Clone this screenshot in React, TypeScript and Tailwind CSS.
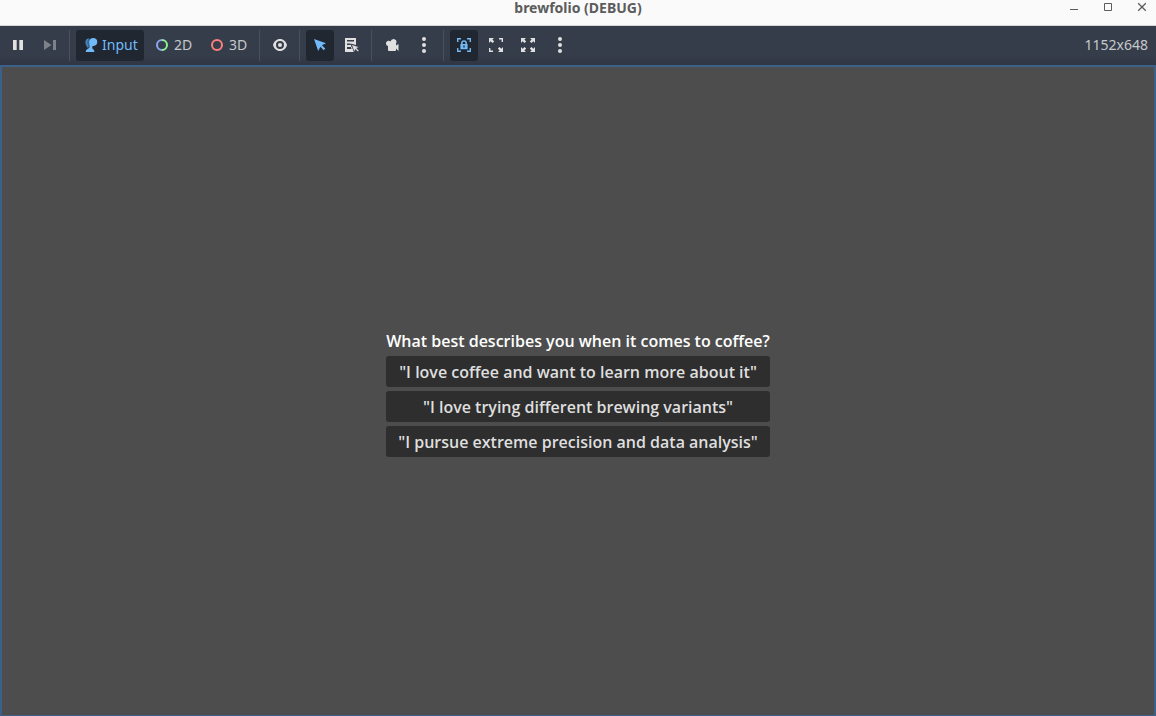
import type { ReactNode } from "react";

const OPTIONS = [
  '"I love coffee and want to learn more about it"',
  '"I love trying different brewing variants"',
  '"I pursue extreme precision and data analysis"',
];

function Icon({ children }: { children: ReactNode }) {
  return (
    <svg viewBox="0 0 16 16" className="size-4 shrink-0" fill="currentColor" aria-hidden="true">
      {children}
    </svg>
  );
}

type ToolProps = { label: string; text?: string; active?: boolean; disabled?: boolean; children: ReactNode };

function Tool({ label, text, active = false, disabled = false, children }: ToolProps) {
  const tone = active ? "bg-[#202731] text-[#70bafa]" : disabled ? "text-[#7d828a]" : "text-[#e0e0e0]";
  return (
    <button
      type="button"
      aria-label={label}
      aria-pressed={active}
      disabled={disabled}
      className={`flex h-[31px] shrink-0 items-center gap-1 rounded-[3px] px-1.5 pb-0.5 ${tone}`}
    >
      <Icon>{children}</Icon>
      {text && <span className={`min-w-[19px] ${active ? "text-[#70bafa]" : "text-[#c5c8cc]"}`}>{text}</span>}
    </button>
  );
}

function Separator() {
  return (
    <div className="flex h-[31px] w-1 shrink-0 pl-px">
      <div className="w-px bg-[#4b515c]" />
    </div>
  );
}

function Dots() {
  return (
    <>
      <circle cx="8" cy="2" r="2" />
      <circle cx="8" cy="8" r="2" />
      <circle cx="8" cy="14" r="2" />
    </>
  );
}

function TitleBar() {
  return (
    <header className="grid h-[26px] grid-cols-[1fr_auto_1fr] border-b border-[#d5d5d5] bg-[#fafafa] text-[#5c5c5c]">
      <h1 className="col-start-2 text-[14px] leading-4 font-bold">brewfolio (DEBUG)</h1>
      <div className="flex h-4 items-center justify-end gap-[18px] pr-1.5">
        <button type="button" aria-label="Minimize">
          <Icon>
            <path d="M4 9h8v1H4z" />
          </Icon>
        </button>
        <button type="button" aria-label="Maximize">
          <Icon>
            <path d="M4.500 3.500h7v7h-7z" fill="none" stroke="currentColor" />
          </Icon>
        </button>
        <button type="button" aria-label="Close">
          <Icon>
            <path d="M4.200 3.200l7.600 7.600M11.800 3.200l-7.600 7.600" stroke="currentColor" strokeWidth="1.300" />
          </Icon>
        </button>
      </div>
    </header>
  );
}

function Toolbar() {
  return (
    <div
      role="toolbar"
      aria-label="Game view"
      className="flex h-[39px] items-center gap-1 bg-linear-to-b from-[#363d4a] from-75% to-[#303642] px-1 text-[14px] leading-5"
    >
      <Tool label="Pause">
        <path d="M3 3h3.700v10H3zM9.300 3H13v10H9.300z" />
      </Tool>
      <Tool label="Next frame" disabled>
        <path d="M2 3l7.500 5L2 13zM11 3h3v10h-3z" />
      </Tool>
      <Separator />
      <Tool label="Input" text="Input" active>
        <path d="M7.500 1.200C4 1.200 2.700 3.700 3.300 6.500 3.700 8.300 4.500 10 5.700 11.500L8.500 8z" fill="#35668f" />
        <path d="M5.800 2C4.200 4 4.400 7 6 9.500" fill="none" stroke="#5a9bd3" strokeWidth=".9" />
        <path d="M11.200 1c2.400 0 4.100 1.600 4.100 3.800 0 2.400-1.500 4-3.700 4.100-.9 0-1.400.5-1.400 1.400 0 1.200.5 1.800 1.500 2.400.4.300.6.800.6 2.300H3.800c0-1.800.3-2.300 1.500-2.800 1.600-.8 2.400-1.600 2.400-3.200 0-1-.6-2.100-.6-3.900C7.100 2.700 8.600 1 11.200 1z" />
      </Tool>
      <Tool label="2D" text="2D">
        <path d="M8 3a5 5 0 0 0 0 10" fill="none" stroke="#8da5f3" strokeWidth="2" />
        <path d="M8 3a5 5 0 0 1 0 10" fill="none" stroke="#8eef97" strokeWidth="2" />
      </Tool>
      <Tool label="3D" text="3D">
        <circle cx="8" cy="8" r="5" fill="none" stroke="#fc7f7f" strokeWidth="2" />
      </Tool>
      <Separator />
      <Tool label="Selection visibility">
        <path
          fillRule="evenodd"
          d="M8 2C4.500 2 2 4.500 1 8c1 3.500 3.500 6 7 6s6-2.500 7-6c-1-3.500-3.500-6-7-6zm0 2a4 4 0 1 1 0 8 4 4 0 0 1 0-8z"
        />
        <circle cx="8" cy="8" r="2" />
      </Tool>
      <Separator />
      <Tool label="Select" active>
        <path d="M2 2l4.200 12 2.200-4.200 3.300 3.400 1.600-1.600L9.900 8.300 14 6.300z" />
      </Tool>
      <Tool label="Show list of selectable nodes">
        <path
          fillRule="evenodd"
          d="M1 1h11v7l-5.500-1.500 1 3.500H8l2 5H1zM3 3v1.500h7V3zM3 6.500V8h4V6.500zM3 10v2h4.500L7 10z"
        />
        <path d="M7.500 7.500l2.700 7.300 1.300-2.400 2.300 2.400 1.200-1.200-2.300-2.300 2.300-1.300z" stroke="#363d4a" strokeWidth=".6" />
      </Tool>
      <Separator />
      <Tool label="Override camera">
        <path d="M9.500 2a3 3 0 0 0-2.900 2.500A2.700 2.700 0 1 0 4 9V13a1 1 0 0 0 1 1h6a1 1 0 0 0 1-1v-1.500L14.500 14V7L12 8.500V6.700A3 3 0 0 0 9.500 2z" />
      </Tool>
      <Tool label="Camera options">
        <Dots />
      </Tool>
      <Separator />
      <Tool label="Fixed size" active>
        <path d="M1.700 5V1.700H5M11 1.700h3.300V5M14.300 11v3.300H11M5 14.300H1.700V11" fill="none" stroke="currentColor" strokeWidth="1.400" />
        <path d="M5.800 7.500V6.200a2.200 2.200 0 0 1 4.400 0v1.300" fill="none" stroke="currentColor" strokeWidth="1.500" />
        <path d="M4.400 7h7.200v5.300H4.400zM7.300 8.500v2h1.400v-2z" fillRule="evenodd" />
      </Tool>
      <Tool label="Keep aspect">
        <path d="M1 1h5L4.400 2.600l1.800 1.800-1.700 1.700-1.900-1.800L1 5.900zM15 15h-5l1.600-1.600-1.800-1.800 1.700-1.700 1.900 1.800L15 10.100z" />
        <path d="M11 1.700h3.300V5M5 14.300H1.700V11" fill="none" stroke="currentColor" strokeWidth="1.400" />
      </Tool>
      <Tool label="Stretch to fit">
        <path d="M1 1h5L4.400 2.600l1.800 1.800-1.700 1.700-1.900-1.800L1 5.900zM15 15h-5l1.600-1.600-1.800-1.800 1.700-1.700 1.900 1.800L15 10.100zM15 1v4.900l-1.600-1.600-1.900 1.800-1.700-1.700 1.800-1.800L10 1zM1 15v-4.900l1.600 1.600 1.900-1.800 1.700 1.700-1.800 1.800L6 15z" />
      </Tool>
      <Tool label="Embedding options">
        <Dots />
      </Tool>
      <span className="ml-auto pr-1 pb-0.5 text-[#c5c8cc]">1152x648</span>
    </div>
  );
}

export default function App() {
  return (
    <div className="flex min-h-screen flex-col bg-[#363d4a] font-['Noto_Sans',sans-serif]">
      <TitleBar />
      <Toolbar />
      <main className="flex flex-1 items-center justify-center border-2 border-b border-[#3b618a] bg-[#4d4d4d] pt-1">
        <section className="flex flex-col gap-1 text-center font-['Open_Sans',sans-serif] text-[16px] leading-[23px] font-semibold">
          <h2 className="pt-0.5 leading-[21px] text-white">What best describes you when it comes to coffee?</h2>
          {OPTIONS.map((option) => (
            <button key={option} type="button" className="rounded-[3px] bg-[#2e2e2e] px-1 pt-[5px] pb-[3px] text-[#dfdfdf]">
              {option}
            </button>
          ))}
        </section>
      </main>
    </div>
  );
}
